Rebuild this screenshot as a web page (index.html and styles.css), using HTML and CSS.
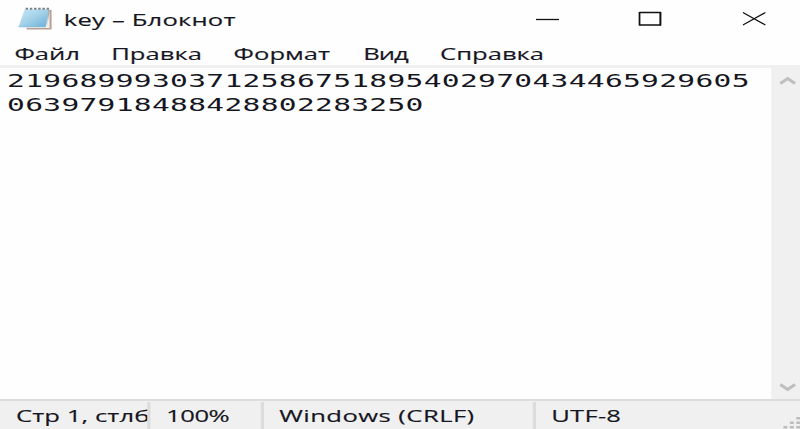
FILE: index.html
```html
<!DOCTYPE html>
<html lang="ru">
<head>
<meta charset="utf-8">
<title>key – Блокнот</title>
<link rel="stylesheet" href="styles.css">
</head>
<body>
<div class="window">
  <header class="titlebar">
    <svg class="app-icon" viewBox="0 0 36 26" preserveAspectRatio="none">
      <defs><linearGradient id="paper" x1="0" y1="0" x2="1" y2="1"><stop offset="0" stop-color="#c5e8f5"/><stop offset=".5" stop-color="#a2d0e8"/><stop offset="1" stop-color="#64aed7"/></linearGradient></defs>
      <path d="M30 4h4v19.500H9v-2h21z" fill="#b5a294"/>
      <path d="M9 21h20.500l2.500-17v18H9z" fill="#f3eeea"/>
      <path d="M7 3.500h24l-3 17.500H1z" fill="url(#paper)"/>
      <path d="M1 20.800h27L31 5" fill="none" stroke="#8bbbd6" stroke-width=".8"/>
      <path d="M8 2.800h24" stroke="#78838c" stroke-width="2" stroke-dasharray="2.500 1.700"/>
    </svg>
    <span class="title">key – Блокнот</span>
    <svg class="control minimize" viewBox="0 0 24 16" preserveAspectRatio="none"><path d="M0 8.500h23"/></svg>
    <svg class="control maximize" viewBox="0 0 24 16" preserveAspectRatio="none"><path d="M1 1.500h21.500M1 14h21.500"/><path class="side" d="M1 1v13.500M22 1v13.500"/></svg>
    <svg class="control close" viewBox="0 0 24 16" preserveAspectRatio="none"><path d="M.5 1.500l22.500 12.500M23 1.500L.5 14"/></svg>
  </header>
  <nav class="menu"><span class="file">Файл</span><span class="edit">Правка</span><span class="format">Формат</span><span class="view">Вид</span><span class="help">Справка</span></nav>
  <main class="editor">
    <div class="text">21968999303712586751895402970434465929605<br>06397918488428802283250</div>
    <aside class="scrollbar">
      <svg viewBox="0 0 16 9" preserveAspectRatio="none"><path d="M1 7.500l7-5 7 5"/></svg>
      <svg viewBox="0 0 16 9" preserveAspectRatio="none"><path d="M1 1.500l7 5 7-5"/></svg>
    </aside>
  </main>
  <footer class="status">
    <span class="position">Стр 1, стлб</span><span class="zoom">100%</span><span class="ending">Windows (CRLF)</span><span class="encoding">UTF-8</span>
    <svg class="grip" viewBox="0 0 18 13" preserveAspectRatio="none"><path d="M1 10h4v2.500H1zM7.500 10h4v2.500h-4zM14 10h4v2.500h-4zM7.500 5.500h4V8h-4zM14 5.500h4V8h-4zM14 1h4v2.500h-4z"/></svg>
  </footer>
</div>
</body>
</html>
```

FILE: styles.css
```css
* { box-sizing: border-box; }
body { margin: 0; overflow: hidden; background: #fefefe; }
.window {
  width: 500px;
  height: 429px;
  display: flex;
  flex-direction: column;
  transform: scaleX(1.6);
  transform-origin: 0 0;
  overflow: hidden;
  color: #161622;
  font: 16px/22px "Open Sans", sans-serif;
  -webkit-text-stroke: .15px #161622;
  white-space: nowrap;
}
.titlebar { height: 40px; flex: none; display: flex; align-items: flex-start; }
.app-icon { width: 22.5px; height: 26px; margin: 6px 0 0 10.6px; flex: none; }
.title { width: 302.3px; flex: none; padding: 9px 0 0 6.8px; letter-spacing: .12px; }
.control { width: 15px; height: 16px; flex: none; margin-top: 11px; fill: none; stroke: #111; stroke-width: 1.3; }
.control .side { stroke-width: 2; }
.maximize { margin-left: 48.9px; }
.close { margin-left: 49.8px; }
.menu { height: 28px; flex: none; display: flex; padding: 3px 0 0 9px; border-bottom: 3px solid #f0f0f0; }
.file { width: 60.5px; }
.edit { width: 76.5px; }
.format { width: 81px; }
.view { width: 48px; letter-spacing: -.6px; }
.editor { flex: 1; display: flex; }
.text { flex: 1; padding: 1px 0 0 4.4px; font: 18.5px/24px "DejaVu Sans Mono", monospace; letter-spacing: .185px; -webkit-text-stroke: 0; }
.scrollbar { width: 18.2px; background: #f0f0f0; display: flex; flex-direction: column; justify-content: space-between; align-items: flex-end; padding: 8px 2.3px 7px 0; }
.scrollbar svg { width: 10.6px; height: 9px; fill: none; stroke: #bfbfbf; stroke-width: 3; }
.status { height: 30px; flex: none; display: flex; background: #f0f0f0; border-top: 2px solid #dcdcdc; }
.status span { padding-top: 3px; margin-top: 1px; overflow: hidden; border-right: 2px solid #dcdcdc; }
.status .position { width: 93.5px; padding-left: 10px; letter-spacing: .05px; }
.status .zoom { width: 71px; padding-left: 10.2px; letter-spacing: -.25px; }
.status .ending { width: 170px; padding-left: 10px; letter-spacing: .28px; }
.status .encoding { flex: 1; padding-left: 10px; border: 0; letter-spacing: .15px; }
.grip { width: 11.2px; height: 13px; margin-top: 15px; fill: #bdbdbd; }
```
